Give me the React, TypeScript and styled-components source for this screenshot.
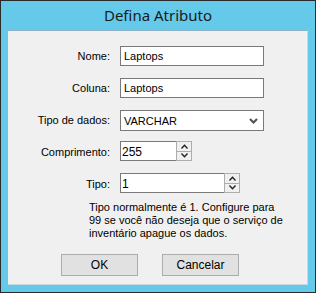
import React from "react";
import styled, { createGlobalStyle } from "styled-components";

const Global = createGlobalStyle`
  html, body { margin: 0; padding: 0; background: #65c9ea; }
  body { font-family: "Liberation Sans", Arial, sans-serif; font-size: 11px; color: #000; }
`;

const Chevron = ({ up }: { up?: boolean }) => (
  <svg width="7" height="5" viewBox="0 0 7 5">
    <path
      d={up ? "M0.5 4.5 L3.5 1.2 L6.5 4.5" : "M0.5 0.5 L3.5 3.8 L6.5 0.5"}
      fill="none"
      stroke="#1e1e1e"
      strokeWidth="1.3"
    />
  </svg>
);

const App = () => {
  return (
    <>
      <Global />
      <Window>
        <TitleBar>Defina Atributo</TitleBar>
        <Panel>
          <Form>
            <Label>Nome:</Label>
            <TextBox>Laptops</TextBox>
            <Label>Coluna:</Label>
            <TextBox>Laptops</TextBox>
            <Label>Tipo de dados:</Label>
            <Select>
              <span>VARCHAR</span>
              <svg width="9" height="6" viewBox="0 0 9 6">
                <path d="M1 1 L4.5 4.5 L8 1" fill="none" stroke="#505050" strokeWidth="2" />
              </svg>
            </Select>
            <Label>Comprimento:</Label>
            <Numeric width={72}>
              <NumValue>255</NumValue>
              <Spinner>
                <SpinButton><Chevron up /></SpinButton>
                <SpinButton><Chevron /></SpinButton>
              </Spinner>
            </Numeric>
            <Label>Tipo:</Label>
            <Numeric width={120}>
              <NumValue>1</NumValue>
              <Spinner>
                <SpinButton><Chevron up /></SpinButton>
                <SpinButton><Chevron /></SpinButton>
              </Spinner>
            </Numeric>
          </Form>
          <Note>
            Tipo normalmente é 1. Configure para
            <br />
            99 se você não deseja que o serviço de
            <br />
            inventário apague os dados.
          </Note>
          <Buttons>
            <Button>OK</Button>
            <Button>Cancelar</Button>
          </Buttons>
        </Panel>
      </Window>
    </>
  );
};

export default App;

const Window = styled.div`
  width: 316px;
  height: 293px;
  box-sizing: border-box;
  border: 1px solid #2b2b2b;
  background: #65c9ea;
  display: flex;
  flex-direction: column;
`;

const TitleBar = styled.div`
  height: 29px;
  display: flex;
  align-items: center;
  justify-content: center;
  font-family: "Noto Sans", "Open Sans", sans-serif;
  font-size: 15px;
  color: #1a1a1a;
  padding-bottom: 1px;
  box-sizing: border-box;
`;

const Panel = styled.div`
  margin-left: 7px;
  width: 300px;
  height: 255px;
  box-sizing: border-box;
  background: #f0f0f0;
  border-top: 1px solid #8fb3c6;
  border-right: 1px solid #c9d7de;
  border-bottom: 1px solid #c9d7de;
  display: flex;
  flex-direction: column;
`;

const Form = styled.div`
  display: grid;
  grid-template-columns: 102px 1fr;
  column-gap: 10px;
  row-gap: 12px;
  grid-auto-rows: 20px;
  margin-top: 15px;
`;

const Label = styled.div`
  text-align: right;
  align-self: center;
  padding-bottom: 1px;
`;

const TextBox = styled.div`
  width: 144px;
  height: 20px;
  box-sizing: border-box;
  border: 1px solid #7a7a7a;
  background: #fff;
  padding: 0 3px;
  display: flex;
  align-items: center;
`;

const Select = styled(TextBox)`
  justify-content: space-between;
  padding: 0 5px 0 3px;
  height: 21px;
`;

const Numeric = styled.div<{ width: number }>`
  width: ${(p) => p.width}px;
  height: 20px;
  box-sizing: border-box;
  border: 1px solid #7a7a7a;
  background: #fff;
  display: flex;
  margin-top: -1px;
`;

const NumValue = styled.div`
  flex: 1;
  display: flex;
  align-items: center;
  padding-left: 1px;
  padding-top: 1px;
  font-size: 12px;
`;

const Spinner = styled.div`
  width: 16px;
  background: #adadad;
  display: flex;
  flex-direction: column;
  gap: 1px;
  padding: 1px;
  margin: -1px -1px -1px 0;
  box-sizing: border-box;
  height: 20px;
`;

const SpinButton = styled.div`
  flex: 1;
  background: #f0f0f0;
  display: flex;
  align-items: center;
  justify-content: center;
`;

const Note = styled.div`
  margin: 7px 0 0 81px;
  line-height: 13px;
  font-size: 11px;
`;

const Buttons = styled.div`
  display: flex;
  gap: 24px;
  margin: 14px 0 0 53px;
`;

const Button = styled.div`
  width: 77px;
  height: 22px;
  box-sizing: border-box;
  border: 1px solid #adadad;
  background: #e1e1e1;
  display: flex;
  align-items: center;
  justify-content: center;
  font-size: 12px;
`;
